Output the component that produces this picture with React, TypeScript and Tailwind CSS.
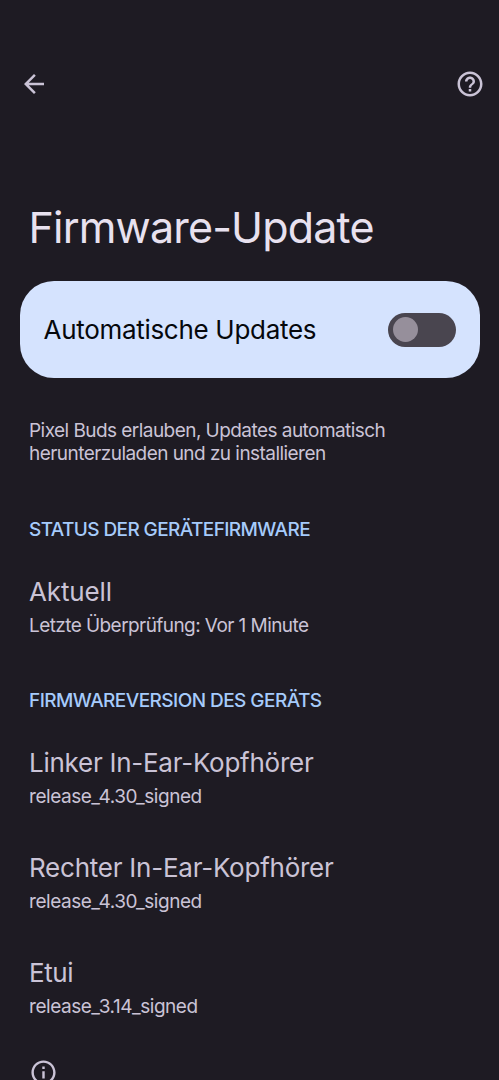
type EntryProps = {
  title: string;
  subtitle: string;
  titleClass?: string;
  subtitleClass?: string;
};

const buds = [
  {
    title: "Linker In-Ear-Kopfhörer",
    subtitle: "release_4.30_signed",
    titleClass: "tracking-[-0.26px]",
  },
  {
    title: "Rechter In-Ear-Kopfhörer",
    subtitle: "release_4.30_signed",
    titleClass: "tracking-[-0.24px]",
  },
  {
    title: "Etui",
    subtitle: "release_3.14_signed",
    titleClass: "tracking-[-0.4px]",
  },
];

function Entry({
  title,
  subtitle,
  titleClass = "tracking-[-0.15px]",
  subtitleClass = "tracking-[-0.46px]",
}: EntryProps) {
  return (
    <div className="whitespace-nowrap">
      <p className={`text-[26px] leading-9 ${titleClass}`}>{title}</p>
      <p className={`mt-1 text-[19px] leading-6 ${subtitleClass}`}>
        {subtitle}
      </p>
    </div>
  );
}

function BackIcon() {
  return (
    <svg className="size-[30px]" viewBox="0 0 24 24" fill="currentColor">
      <path d="M20 11H7.83l5.59-5.59L12 4l-8 8 8 8 1.41-1.41L7.83 13H20v-2z" />
    </svg>
  );
}

function HelpIcon() {
  return (
    <svg className="size-[30px]" viewBox="0 0 24 24" fill="currentColor">
      <path d="M11 18h2v-2h-2v2zm1-16C6.48 2 2 6.48 2 12s4.48 10 10 10 10-4.48 10-10S17.52 2 12 2zm0 18c-4.41 0-8-3.59-8-8s3.59-8 8-8 8 3.59 8 8-3.59 8-8 8zm0-14c-2.21 0-4 1.79-4 4h2c0-1.1.9-2 2-2s2 .9 2 2c0 2-3 1.75-3 5h2c0-2.25 3-2.5 3-5 0-2.21-1.79-4-4-4z" />
    </svg>
  );
}

function InfoIcon() {
  return (
    <svg className="size-[29px] shrink-0" viewBox="0 0 24 24" fill="currentColor">
      <path d="M11 7h2v2h-2zm0 4h2v6h-2zm1-9C6.48 2 2 6.48 2 12s4.48 10 10 10 10-4.48 10-10S17.52 2 12 2zm0 18c-4.41 0-8-3.59-8-8s3.59-8 8-8 8 3.59 8 8-3.59 8-8 8z" />
    </svg>
  );
}

export default function App() {
  return (
    <div className="h-[1080px] w-full overflow-hidden bg-[#1e1b23] font-['Inter',sans-serif] text-[#cac3d6]">
      <header className="flex items-center justify-between pt-[69px] pr-[14px] pl-[19px]">
        <button aria-label="Zurück">
          <BackIcon />
        </button>
        <button aria-label="Hilfe">
          <HelpIcon />
        </button>
      </header>

      <h1 className="mt-[100px] pl-[28.5px] text-[43px] leading-[56px] tracking-[-0.82px] text-[#e8e1ef]">
        Firmware-Update
      </h1>

      <div className="mx-auto mt-[26px] flex h-[97px] w-[460px] items-center justify-between rounded-[34px] bg-[#d5e3fe] pr-6 pl-6">
        <span className="text-[26px] tracking-[-0.3px] text-[#06080c]">
          Automatische Updates
        </span>
        <button
          role="switch"
          aria-checked="false"
          aria-label="Automatische Updates"
          className="flex h-[34px] w-[68px] items-center rounded-full bg-[#49454f] pl-[5px]"
        >
          <span className="size-[25px] rounded-full bg-[#968f9b]" />
        </button>
      </div>

      <main className="pl-[29px]">
        <p className="mt-[41px] text-[19px] leading-[23px] tracking-[-0.55px] whitespace-nowrap">
          Pixel Buds erlauben, Updates automatisch
          <br />
          herunterzuladen und zu installieren
        </p>

        <h2 className="mt-[53px] text-[19px] leading-6 font-medium tracking-[-0.6px] text-[#a6cbfb]">
          STATUS DER GERÄTEFIRMWARE
        </h2>
        <div className="mt-8">
          <Entry
            title="Aktuell"
            subtitle="Letzte Überprüfung: Vor 1 Minute"
            subtitleClass="tracking-[-0.57px]"
          />
        </div>

        <h2 className="mt-[51px] text-[19px] leading-6 font-medium tracking-[-0.55px] text-[#a6cbfb]">
          FIRMWAREVERSION DES GERÄTS
        </h2>
        <div className="mt-8 flex flex-col gap-[41px]">
          {buds.map((bud) => (
            <Entry key={bud.title} {...bud} />
          ))}
        </div>

        <div className="mt-[39px]">
          <InfoIcon />
        </div>
      </main>
    </div>
  );
}
